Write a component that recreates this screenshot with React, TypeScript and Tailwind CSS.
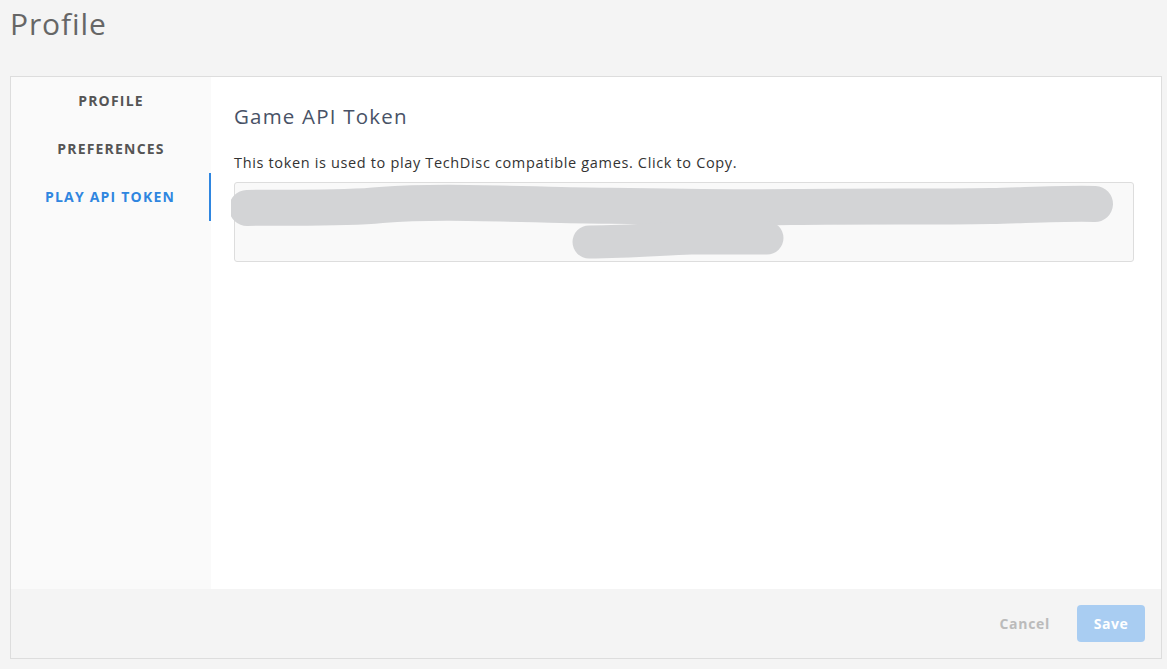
const navItems = [
  { title: 'Profile', active: false },
  { title: 'Preferences', active: false },
  { title: 'Play API Token', active: true },
]

export default function App() {
  return (
    <div
      className="h-[669px] w-[1167px] overflow-hidden bg-[#f4f4f4] pl-[10px] pr-[5px]"
      style={{ fontFamily: '"Open Sans", "Liberation Sans", sans-serif' }}
    >
      <h1 className="pt-[4px] text-[30px] leading-[40px] tracking-[0.9px] text-[#666666]">Profile</h1>

      {/* Card */}
      <div className="mt-[32px] flex h-[583px] flex-col border border-[#dddddd]">
        <div className="flex flex-1">
          {/* Sidebar */}
          <nav className="w-[200px] bg-[#fafafa]">
            {navItems.map((item) => (
              <div
                key={item.title}
                className={
                  item.active
                    ? 'flex h-[48px] items-center justify-center border-r-2 border-[#2f86e0] pb-[1px] text-[14px] font-bold uppercase tracking-[1.2px] text-[#2f86e0]'
                    : 'flex h-[48px] items-center justify-center pb-[1px] text-[14px] font-bold uppercase tracking-[1.2px] text-[#555555]'
                }
              >
                {item.title}
              </div>
            ))}
          </nav>

          {/* Main */}
          <main className="flex-1 bg-white px-[23px] pt-[26px]">
            <h2 className="text-[20.5px] leading-[26px] tracking-[1.2px] text-[#485266]">Game API Token</h2>
            <p className="mt-[24px] text-[14.5px] leading-[20px] tracking-[0.65px] text-[#333333]">
              This token is used to play TechDisc compatible games. Click to Copy.
            </p>
            <div className="relative mt-[9px] h-[80px] w-[900px] cursor-pointer rounded-[3px] border border-[#dddddd] bg-[#f9f9f9]">
              <svg className="absolute -left-[4px] top-0" width="900" height="80" viewBox="0 0 900 80" fill="none">
                <path
                  d="M16 25 C 60 24, 110 26, 150 22 C 200 18, 250 20, 330 22 C 400 23, 470 25, 560 24 C 640 23, 700 24, 760 23 C 800 22, 840 20, 864 21"
                  stroke="#d3d4d6"
                  strokeWidth="36"
                  strokeLinecap="round"
                />
                <path
                  d="M358 59 C 400 59, 430 56, 460 55 C 490 55, 520 55, 536 55"
                  stroke="#d3d4d6"
                  strokeWidth="33"
                  strokeLinecap="round"
                />
              </svg>
            </div>
          </main>
        </div>

        {/* Footer */}
        <div className="flex h-[69px] items-center justify-end gap-[27px] bg-[#f4f4f4] pr-[16px]">
          <button className="text-[14px] font-bold tracking-[0.7px] text-[#bbbbbb]">Cancel</button>
          <button className="h-[37px] w-[68px] rounded-[4px] bg-[#a9cdf2] text-[14px] font-bold tracking-[0.5px] text-white">
            Save
          </button>
        </div>
      </div>
    </div>
  )
}
